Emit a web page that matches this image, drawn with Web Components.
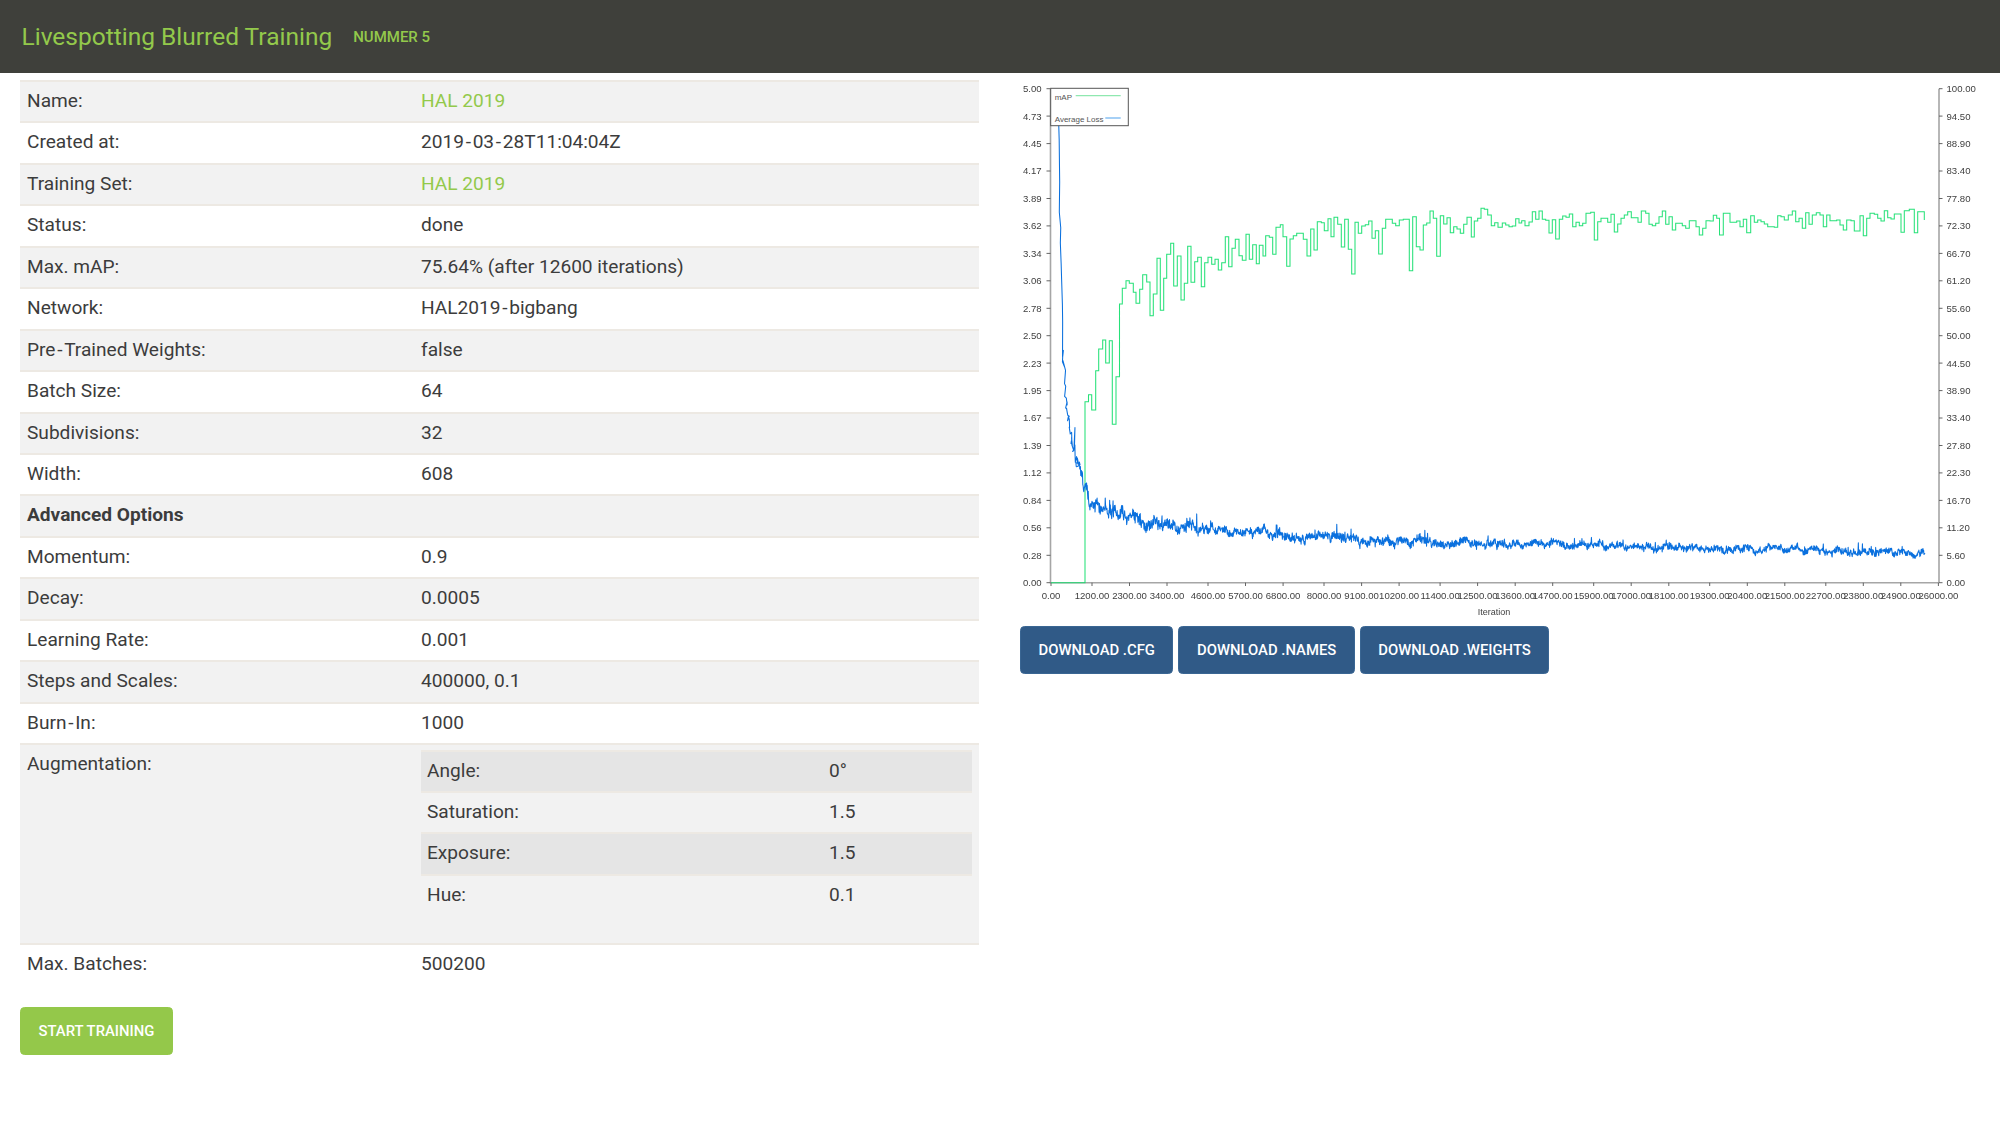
<!DOCTYPE html>
<html lang="en">
<head>
<meta charset="utf-8">
<title>Livespotting Blurred Training</title>
<style>
  html, body { margin: 0; background: #fff; }
  body { font-family: Roboto, "Liberation Sans", sans-serif; color: #3c3c3c; }
  .h { padding: 0 1.7px; }
</style>
</head>
<body>
<app-header>
  <span>Livespotting Blurred Training</span>
  <span slot="sub">NUMMER 5</span>
</app-header>
<page-layout>
  <div slot="left">
    <kv-table>
      <kv-row accent><span slot="label">Name:</span>HAL 2019</kv-row>
      <kv-row><span slot="label">Created at:</span>2019<span class="h">-</span>03<span class="h">-</span>28T11:04:04Z</kv-row>
      <kv-row accent><span slot="label">Training Set:</span>HAL 2019</kv-row>
      <kv-row><span slot="label">Status:</span>done</kv-row>
      <kv-row><span slot="label">Max. mAP:</span>75.64% (after 12600 iterations)</kv-row>
      <kv-row><span slot="label">Network:</span>HAL2019<span class="h">-</span>bigbang</kv-row>
      <kv-row><span slot="label">Pre<span class="h">-</span>Trained Weights:</span>false</kv-row>
      <kv-row><span slot="label">Batch Size:</span>64</kv-row>
      <kv-row><span slot="label">Subdivisions:</span>32</kv-row>
      <kv-row><span slot="label">Width:</span>608</kv-row>
      <kv-row bold><span slot="label">Advanced Options</span></kv-row>
      <kv-row><span slot="label">Momentum:</span>0.9</kv-row>
      <kv-row><span slot="label">Decay:</span>0.0005</kv-row>
      <kv-row><span slot="label">Learning Rate:</span>0.001</kv-row>
      <kv-row><span slot="label">Steps and Scales:</span>400000, 0.1</kv-row>
      <kv-row><span slot="label">Burn<span class="h">-</span>In:</span>1000</kv-row>
      <kv-row><span slot="label">Augmentation:</span>
        <kv-table nested>
          <kv-row><span slot="label">Angle:</span>0°</kv-row>
          <kv-row><span slot="label">Saturation:</span>1.5</kv-row>
          <kv-row><span slot="label">Exposure:</span>1.5</kv-row>
          <kv-row><span slot="label">Hue:</span>0.1</kv-row>
        </kv-table>
      </kv-row>
      <kv-row><span slot="label">Max. Batches:</span>500200</kv-row>
    </kv-table>
    <action-button kind="go">START TRAINING</action-button>
  </div>
  <div slot="right">
    <training-chart></training-chart>
    <button-row>
      <action-button>DOWNLOAD .CFG</action-button>
      <action-button>DOWNLOAD .NAMES</action-button>
      <action-button>DOWNLOAD .WEIGHTS</action-button>
    </button-row>
  </div>
</page-layout>

<script>
function define(name, html, extra) {
  const tpl = document.createElement('template');
  tpl.innerHTML = html;
  customElements.define(name, class extends HTMLElement {
    constructor() {
      super();
      this.attachShadow({ mode: 'open' }).appendChild(tpl.content.cloneNode(true));
    }
    connectedCallback() { if (extra) extra(this.shadowRoot); }
  });
}

define('app-header', `
<style>
  :host { display: flex; align-items: center; height: 73px; box-sizing: border-box; padding: 0 0 0 21.5px; background: #3f403b; color: #93c94b; }
  .title { font-size: 24.5px; line-height: 30px; }
  .sub { font-size: 15px; font-weight: 500; margin-left: 21px; }
</style>
<div class="title"><slot></slot></div>
<div class="sub"><slot name="sub"></slot></div>`);

define('page-layout', `
<style>
  :host { display: flex; align-items: flex-start; }
  .left { width: 958.5px; box-sizing: content-box; padding: 7px 21.5px 0 20px; }
  .right { flex: 1; min-width: 0; }
</style>
<div class="left"><slot name="left"></slot></div>
<div class="right"><slot name="right"></slot></div>`);

define('kv-table', `
<style>
  :host { display: block; --col: 394px; --pad-l: 7px; --pad-r: 6.5px; }
  :host([nested]) { --col: 402px; --pad-l: 6px; --pad-r: 6px; margin: -0.5px 0 21.3px; }
  ::slotted(kv-row:nth-child(odd)) { background: #f2f2f2; }
  :host([nested]) ::slotted(kv-row:nth-child(odd)) { background: #e5e5e5; }
  :host([nested]) ::slotted(kv-row:nth-child(even)) { background: transparent; }
</style>
<slot></slot>`);

define('kv-row', `
<style>
  :host { display: grid; grid-template-columns: var(--col) 1fr; box-sizing: border-box; padding: 5px var(--pad-r) 6.95px var(--pad-l); border-top: 2px solid #ede9e3; font-size: 19.13px; line-height: 27.5px; color: #3c3c3c; }
  :host([accent]) .value { color: #93c94b; }
  :host([bold]) .label { font-weight: 700; }
  .value { min-width: 0; }
</style>
<div class="label"><slot name="label"></slot></div>
<div class="value"><slot></slot></div>`);

define('button-row', `
<style>
  :host { display: flex; gap: 5px; padding: 8px 0 0 20px; }
</style>
<slot></slot>`);

define('action-button', `
<style>
  :host { display: inline-flex; align-items: center; justify-content: center; box-sizing: border-box; height: 48.4px; padding: 0 17.5px; border: 1px solid #3a6693; border-radius: 4.5px; background: #305a87; color: #fff; font-size: 14.85px; font-weight: 500; white-space: nowrap; }
  :host([kind="go"]) { margin-top: 22px; background: #94c84a; border-color: #94c84a; }
</style>
<slot></slot>`);

/* ---- chart data, traced from the plot (page pixels) ---- */
const GREEN = [[1051,582.7],[1085,401.7],[1088.5,394.7],[1091.7,410],[1095.7,370.7],[1098.7,349],[1102.7,340],[1105.7,363],[1109.3,340.7],[1112.3,424.3],[1116,376.7],[1119.5,304],[1122.3,288.3],[1126,280.7],[1129.3,283.3],[1133.3,292.3],[1136,303.3],[1139.7,289.3],[1142.7,274.7],[1146.7,282],[1150,315.7],[1153.3,294],[1157,258.3],[1160.3,310.3],[1163.7,278.3],[1166.7,254.3],[1170.7,243.3],[1173.7,286],[1177.3,256],[1181,300],[1184.3,283.3],[1187.7,246.3],[1191,282.3],[1194.7,261.7],[1197.7,257.3],[1201.3,286.7],[1204.7,262.7],[1208,257.3],[1211.7,264.3],[1215,259.3],[1218.3,270],[1221.7,262.7],[1225.3,236.7],[1228.7,266.7],[1232,248.3],[1235.3,239.3],[1239,255.7],[1242.3,260.3],[1246,234.3],[1249.3,259.3],[1252.7,244.7],[1256.3,263.7],[1259.3,245.3],[1263,256],[1265.7,235.7],[1269.3,237.3],[1272.7,254.3],[1276,227.3],[1280.3,224.7],[1283,236.7],[1286.7,266.3],[1290,239],[1293.3,235.7],[1296.7,233.3],[1303.3,239.3],[1307,256],[1310.7,229],[1314,250],[1317.3,221.7],[1321.3,222.7],[1324.3,230.7],[1328,218.7],[1331,236.7],[1334,217.3],[1337.7,224.3],[1341.3,247],[1344.7,219.3],[1348.3,249.3],[1351.7,274],[1355,222.3],[1358.3,233.3],[1361.7,226],[1365.3,224.7],[1368.7,221],[1372,238.3],[1375.3,230.7],[1378.7,254],[1382.3,228.3],[1385.7,219.3],[1392.3,223.3],[1395.7,225.7],[1399.3,220],[1403.3,219.3],[1409.3,270.7],[1412.7,216.7],[1416.3,246.7],[1420,250],[1423.3,225],[1426.7,223],[1430,211],[1433.3,218.3],[1436.7,256.3],[1440.3,215.7],[1443.7,224],[1447,217.7],[1450.3,232.7],[1453.7,226.7],[1457,229],[1460.3,233.3],[1463.7,224.3],[1467,217.3],[1471.3,237],[1474.3,221],[1477.7,218.3],[1481,208.3],[1484.3,209.3],[1487.7,215],[1491.3,225.7],[1494.7,222.7],[1498,227.3],[1502.3,223],[1505.7,225],[1509,226.7],[1512.3,226],[1515.7,218.7],[1519,223],[1521.7,220.7],[1525,225.7],[1529,222],[1532.3,211.7],[1535.7,219.3],[1539,211],[1542.3,219.3],[1545.7,220.3],[1549,233],[1552.3,219.7],[1555.7,239],[1559.3,219.3],[1562.7,216],[1566,217.3],[1569.3,214],[1572.7,226.7],[1576,222.3],[1579.3,225.7],[1582.7,223.3],[1586,213.3],[1590.7,212.3],[1594.3,240],[1597.7,221.7],[1601,218.3],[1607.7,222.3],[1611,214.3],[1614.3,232],[1617.7,224],[1621,218.3],[1624.3,215],[1627.7,211.7],[1631.3,217.7],[1638,222.3],[1641.3,211],[1645.7,213.3],[1649,224.3],[1652.3,225.7],[1655.7,223.3],[1659,216.7],[1662.3,211],[1665.7,224.3],[1669,216.7],[1672.3,230],[1675.7,223.3],[1682.3,225.7],[1685.7,228.3],[1689.3,220.7],[1696,226.7],[1699.3,235],[1702.7,228.3],[1706,220.7],[1710,221],[1713.3,215.3],[1716.7,218.3],[1719.5,235],[1723.3,213.3],[1730,222.3],[1736.7,221],[1740,226.7],[1743.3,219.3],[1746.7,232.7],[1750.7,215.7],[1754.3,222.3],[1757.7,220],[1761,221.7],[1764.3,224],[1767.7,226.7],[1774.3,227.3],[1777.7,215.7],[1781,216.7],[1784.3,220],[1788.3,215],[1792.3,211],[1795.7,221.7],[1799,218.3],[1802.3,228.3],[1805.7,212.7],[1809,224.3],[1812.3,215],[1816.3,212.7],[1820,215],[1823.3,226.7],[1826.7,215],[1830,220.7],[1836.7,220],[1840,225],[1843.3,230],[1846.7,220],[1851,220.7],[1854.3,231],[1860,215.7],[1863.3,235.7],[1866.7,218.3],[1870,213.3],[1874.3,214.3],[1877.7,218.3],[1881,221],[1884.3,210.7],[1887.7,217.7],[1891,219],[1894.3,214],[1901,232.3],[1904.3,210.7],[1909.3,209.3],[1914.3,232.7],[1917.7,211.7],[1921.7,211.7],[1924.3,220]];
const LOSS_MEAN = [[1059,92],[1059.5,160],[1060,210],[1061,260],[1062,320],[1062.3,353],[1063.7,363],[1065.5,390],[1067.7,410],[1071,437],[1075,453],[1080,473],[1083,483],[1087,490],[1090,503],[1100,503],[1117,517],[1133,518],[1150,523],[1167,523],[1183,528],[1200,528],[1233,532],[1267,533],[1300,536],[1333,538],[1367,540],[1400,541.7],[1496,543],[1591,545.7],[1687,548],[1783,550],[1878,551.7],[1925,552.7]];

function stepPath(pts) {
  let d = 'M' + pts[0][0] + ' ' + pts[0][1];
  for (let i = 1; i < pts.length; i++) {
    d += 'H' + pts[i][0] + 'V' + pts[i][1];
  }
  return d;
}
function lossPath() {
  let seed = 20190328;
  const rnd = () => {
    seed ^= seed << 13; seed ^= seed >>> 17; seed ^= seed << 5;
    return (seed >>> 0) / 4294967296;
  };
  let seg = 0, d = '', slow = 0;
  for (let x = 1059; x <= 1925; x += 0.34) {
    while (seg < LOSS_MEAN.length - 2 && x > LOSS_MEAN[seg + 1][0]) seg++;
    const a = LOSS_MEAN[seg], b = LOSS_MEAN[seg + 1];
    const y = a[1] + (b[1] - a[1]) * Math.min(1, (x - a[0]) / (b[0] - a[0]));
    const amp = x < 1090 ? 6 : x < 1200 ? 5.2 : x < 1500 ? 4 : 3.1;
    slow += (rnd() - .5); slow *= .88;
    let n = (rnd() - .5) * amp * 1.9 + slow * amp * 1.1;
    if (rnd() < .018) n -= amp * (.9 + rnd() * 1.5);
    d += (d ? 'L' : 'M') + (y < 470 ? x + (rnd() - .5) * 2.4 : x).toFixed(2) + ' ' + (y + n).toFixed(1);
  }
  return d;
}

const leftVals = ['5.00','4.73','4.45','4.17','3.89','3.62','3.34','3.06','2.78','2.50','2.23','1.95','1.67','1.39','1.12','0.84','0.56','0.28','0.00'];
const rightVals = ['100.00','94.50','88.90','83.40','77.80','72.30','66.70','61.20','55.60','50.00','44.50','38.90','33.40','27.80','22.30','16.70','11.20','5.60','0.00'];
const bottomVals = [0,1200,2300,3400,4600,5700,6800,8000,9100,10200,11400,12500,13600,14700,15900,17000,18100,19300,20400,21500,22700,23800,24900,26000];
const T = 88.7, B = 582.7, L = 1050.5, R = 1939;

let marks = '';
leftVals.forEach((v, i) => {
  const y = (T + (B - T) * i / 18).toFixed(1);
  marks += `<path class="tick" d="M1046.5 ${y}H${L}"/><text x="1041.7" y="${y}" dy="3.4" text-anchor="end">${v}</text>`;
});
rightVals.forEach((v, i) => {
  const y = (T + (B - T) * i / 18).toFixed(1);
  marks += `<path class="tick" d="M${R} ${y}H1942.5"/><text x="1946.5" y="${y}" dy="3.4">${v}</text>`;
});
bottomVals.forEach(v => {
  const x = (1051 + v * 0.03413).toFixed(1);
  marks += `<path class="tick" d="M${x} ${B}V586"/><text x="${x}" y="599" text-anchor="middle">${v}.00</text>`;
});

define('training-chart', `
<style>
  :host { display: block; width: 1000px; height: 545px; }
  svg { display: block; width: 1000px; height: 545px; filter: blur(.35px); font-family: "Liberation Sans", Arial, sans-serif; }
  text { font-size: 9.6px; fill: #3f3f3f; }
  .tick { stroke: #555; stroke-width: .9; fill: none; }
  .axis { stroke: #a6a6a6; stroke-width: 1.6; fill: none; }
  .green { stroke: #14de6c; stroke-width: 1.05; fill: none; opacity: .92; }
  .blue { stroke: #0a70de; stroke-width: 1.05; fill: none; stroke-linejoin: round; }
  .legend { fill: #fff; stroke: #555; stroke-width: 1; }
  .legend-text { font-size: 8px; fill: #555; }
</style>
<svg viewBox="1000 73 1000 545" role="img" aria-label="Training chart">
  <path class="axis" d="M${L} ${T}V${B}H${R}M${R} ${T}V${B}"/>
  ${marks}
  <text x="1494" y="615" text-anchor="middle" style="font-size:9px">Iteration</text>
  <path class="green" id="g"/>
  <path class="blue" id="b"/>
  <rect class="legend" x="1050.7" y="88.3" width="77.6" height="37.4"/>
  <text class="legend-text" x="1054.7" y="99.5">mAP</text>
  <path d="M1075.7 95.7H1120.7" stroke="#8fe8b0" stroke-width="1.2"/>
  <text class="legend-text" x="1054.7" y="122">Average Loss</text>
  <path d="M1105.3 118H1120.7" stroke="#6ab0f0" stroke-width="1.2"/>
</svg>`, root => {
  root.getElementById('g').setAttribute('d', stepPath(GREEN));
  root.getElementById('b').setAttribute('d', lossPath());
});
</script>
</body>
</html>
